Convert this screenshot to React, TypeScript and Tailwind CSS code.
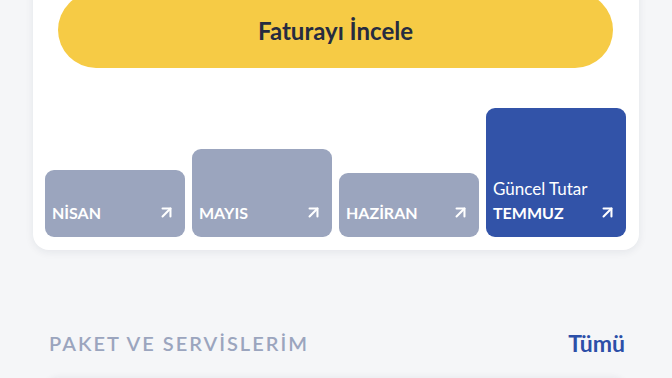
import React from 'react';
import { ArrowUpRight } from 'lucide-react';

interface Month {
    name: string;
    height: string;
    active?: boolean;
}

const months: Month[] = [
    { name: 'NİSAN', height: 'h-[67px]' },
    { name: 'MAYIS', height: 'h-[88px]' },
    { name: 'HAZİRAN', height: 'h-[64px]' },
    { name: 'TEMMUZ', height: 'h-[129px]', active: true },
];

const App: React.FC = () => {
    return (
        <div className="w-[672px] h-[378px] overflow-hidden bg-[#f5f6f8]" style={{ fontFamily: 'Lato, "Noto Sans", sans-serif' }}>
            <div className="px-[33px]">
                <div className="-mt-[30px] bg-white rounded-b-[16px] shadow-[0_2px_8px_rgba(30,40,70,0.08)] pt-[22px] px-[12px] pb-[13px]">
                    <button className="mx-[13px] w-[555px] h-[76px] rounded-full bg-[#f6cb45] flex items-center justify-center">
                        <span className="text-[24px] font-bold text-[#262b40] pt-[2px]">Faturayı İncele</span>
                    </button>
                    <div className="mt-[40px] h-[129px] flex items-end gap-[7px]">
                        {months.map((m) => (
                            <div
                                key={m.name}
                                className={`w-[140px] ${m.height} rounded-[9px] flex flex-col justify-end px-[7px] pb-[15px] ${m.active ? 'bg-[#3253a8]' : 'bg-[#9ba5be]'}`}
                            >
                                {m.active && (
                                    <span className="text-[17px] text-white leading-none mb-[6px]">Güncel Tutar</span>
                                )}
                                <div className="flex items-center justify-between">
                                    <span className="text-[16px] font-bold text-white leading-none">{m.name}</span>
                                    <ArrowUpRight className="w-[19px] h-[19px] text-white mr-[2px]" strokeWidth={2.6} />
                                </div>
                            </div>
                        ))}
                    </div>
                </div>
            </div>
            <div className="mt-[76px] pl-[49px] pr-[47px] flex items-center justify-between">
                <span className="text-[20px] font-semibold tracking-[0.1em] text-[#9ba5be]">PAKET VE SERVİSLERİM</span>
                <span className="text-[23px] font-bold text-[#2c4fa8]">Tümü</span>
            </div>
            <div className="mx-[45px] mt-[18px] h-[40px] bg-white rounded-t-[14px] shadow-[0_-2px_6px_rgba(30,40,70,0.06)]" />
        </div>
    );
};

export default App;
